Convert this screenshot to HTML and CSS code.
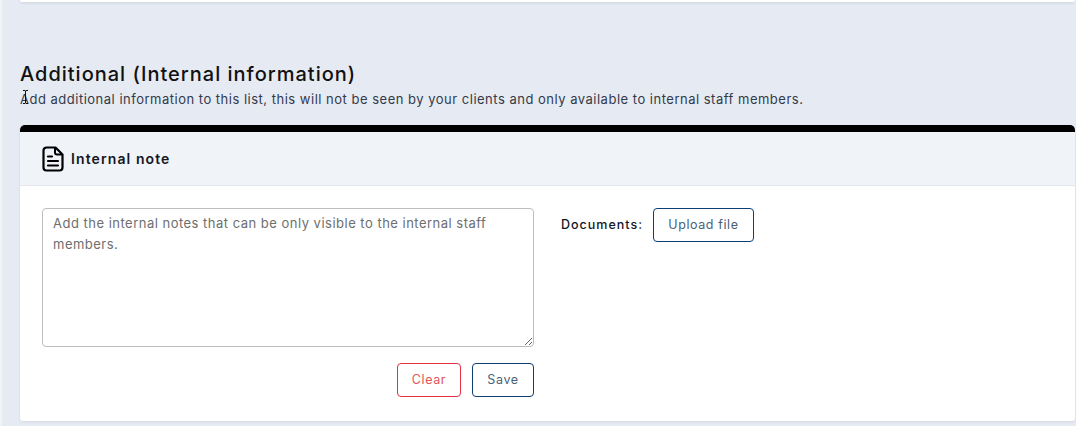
FILE: index.html
```html
<!DOCTYPE html>
<html lang="en">
<head>
<meta charset="utf-8">
<title>Internal information</title>
<link rel="stylesheet" href="styles.css">
</head>
<body>
<main class="page">
  <div class="top-card"></div>
  <section class="section">
    <h2 class="title">Additional (Internal information)</h2>
    <p class="subtitle">Add additional information to this list, this will not be seen by your clients and only available to internal staff members.<svg class="cursor" width="7" height="14" viewBox="0 0 7 14"><path d="M1 .5h2l.5.5.5-.5h2M3.500 1v12M1 13.500h2l.5-.5.5.5h2" fill="none" stroke="#111" stroke-width="1"/></svg></p>
    <div class="card">
      <header class="card-head">
        <svg class="doc-icon" width="22" height="26" viewBox="0 0 22 26"><path d="M4.500 1.500h9l7 7v13a3 3 0 0 1-3 3h-13a3 3 0 0 1-3-3v-17a3 3 0 0 1 3-3z" fill="none" stroke="#000" stroke-width="2.200" stroke-linejoin="round"/><path d="M13 2v4.500a2 2 0 0 0 2 2h5" fill="none" stroke="#000" stroke-width="2"/><path d="M6 10.500h4M6 15h10M6 19.500h10" stroke="#000" stroke-width="2.200" stroke-linecap="round"/></svg>
        <h3 class="card-title">Internal note</h3>
      </header>
      <div class="card-body">
        <div class="note-col">
          <textarea class="note" placeholder="Add the internal notes that can be only visible to the internal staff members."></textarea>
          <div class="actions">
            <button class="btn btn-clear" type="button">Clear</button>
            <button class="btn btn-save" type="button">Save</button>
          </div>
        </div>
        <div class="docs">
          <span class="docs-label">Documents:</span>
          <button class="btn btn-upload" type="button">Upload file</button>
        </div>
      </div>
    </div>
  </section>
</main>
</body>
</html>
```

FILE: styles.css
```css
* { box-sizing: border-box; }
html, body { margin: 0; height: 100%; }
body {
  background: #f1f3f6;
  font-family: "Inter", "Liberation Sans", sans-serif;
  color: #111;
  overflow: hidden;
}
.page {
  margin-left: 2px;
  height: 426px;
  background: #e6eaf2;
  padding: 0 1px 0 18px;
  overflow: hidden;
}
.top-card {
  height: 2px;
  background: #fff;
  border-radius: 0 0 4px 4px;
  box-shadow: 0 1px 3px rgba(0,0,0,.12);
}
.section { padding-top: 60px; }
.title {
  margin: 0;
  font-size: 20px;
  line-height: 24px;
  font-weight: 500;
  letter-spacing: 1px;
  color: #111;
}
.subtitle {
  position: relative;
  margin: 3px 0 0;
  font-size: 13px;
  line-height: 20px;
  letter-spacing: .5px;
  color: #333a4a;
}
.cursor { position: absolute; left: 2px; top: 1px; }
.card {
  margin-top: 16px;
  height: 296px;
  background: #fff;
  border-top: 7px solid #000;
  border-radius: 5px 5px 3px 3px;
  box-shadow: 0 1px 3px rgba(0,0,0,.08);
}
.card-head {
  display: flex;
  align-items: center;
  gap: 7px;
  height: 54px;
  padding: 0 22px;
  background: #f0f3f8;
  border-bottom: 1px solid #e4e8ee;
}
.card-title {
  margin: 0;
  font-size: 14px;
  font-weight: 600;
  letter-spacing: 1.1px;
  color: #14171f;
}
.card-body {
  display: flex;
  gap: 27px;
  padding: 22px;
}
.note-col { width: 492px; }
.note {
  display: block;
  width: 100%;
  height: 139px;
  padding: 4px 10px;
  border: 1px solid #bdbdbd;
  border-radius: 4px;
  font: 13px/21px "Inter", "Liberation Sans", sans-serif;
  letter-spacing: .49px;
  color: #6e6e6e;
  background: #fff;
}
.note::placeholder { color: #6e6e6e; opacity: 1; }
.actions {
  display: flex;
  justify-content: flex-end;
  gap: 11px;
  margin-top: 16px;
}
.btn {
  height: 34px;
  padding: 0;
  background: #fff;
  border: 1px solid #0b3f76;
  border-radius: 4px;
  font: 12.500px "Inter", "Liberation Sans", sans-serif;
  letter-spacing: .6px;
  color: #4a5f78;
  line-height: 32px;
}
.btn-clear { width: 64px; border-color: #e5303f; color: #e0555a; }
.btn-save { width: 62px; }
.btn-upload { width: 101px; }
.docs { display: flex; align-items: flex-start; gap: 10px; }
.docs-label {
  font-size: 12.500px;
  font-weight: 500;
  line-height: 34px;
  letter-spacing: 1px;
  color: #14171f;
}
```
